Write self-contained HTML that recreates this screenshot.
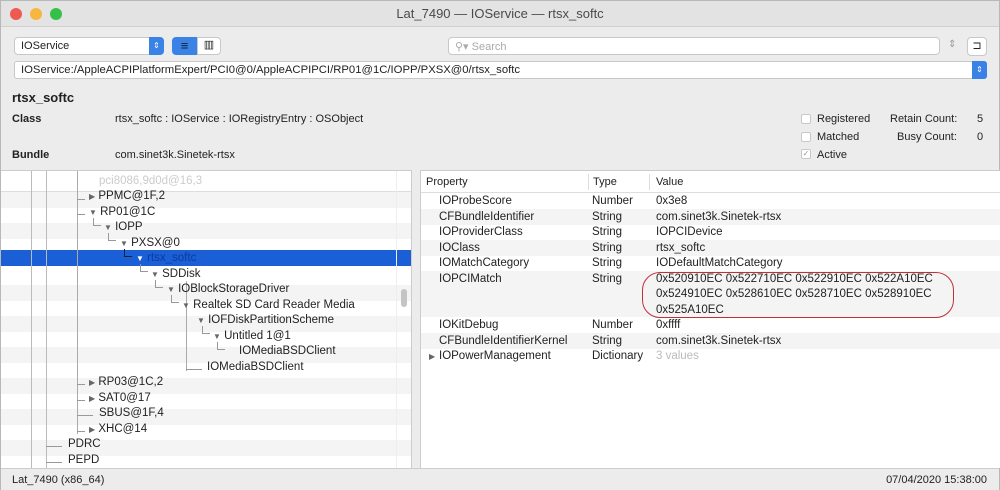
<!DOCTYPE html>
<html><head><meta charset="utf-8"><style>
*{box-sizing:border-box;margin:0;padding:0}
body{width:1000px;height:490px;overflow:hidden;background:#fff;font-family:"Liberation Sans",sans-serif;font-size:11px;color:#222}
.win{position:absolute;left:0;top:0;width:1000px;height:490px;background:#ececec;border:1px solid #b8b8b8}
.tb{position:absolute;left:0;top:0;width:998px;height:26px;background:#e3e3e3;border-bottom:1px solid #d0d0d0;text-align:center;line-height:26px;font-size:13px;color:#4a4a4a}
.dot{position:absolute;top:7px;width:12px;height:12px;border-radius:50%}
.a{position:absolute;white-space:nowrap}
.box{position:absolute;background:#fff;border:1px solid #c8c8c8;border-radius:4px}
.row{position:absolute;left:0;height:15.5px;width:100%}
.t{position:absolute;white-space:nowrap;font-size:11.5px}
.tri{font-size:8px;color:#666}
.c{position:absolute;border-left:1px solid #999;border-bottom:1px solid #999;width:8px;height:8px}
</style></head><body><div class="win">
<div class="tb">Lat_7490 — IOService — rtsx_softc
<div class="dot" style="left:9px;background:#ee5a52"></div><div class="dot" style="left:29px;background:#f6b73e"></div><div class="dot" style="left:49px;background:#35c048"></div></div>

<div class="box" style="left:13px;top:36px;width:150px;height:18px"><span class="a" style="left:6px;top:2px;font-size:11px">IOService</span><div style="position:absolute;right:-1px;top:-1px;width:15px;height:18px;background:#3b82e6;border-radius:0 4px 4px 0;color:#fff;font-size:8px;text-align:center;line-height:18px">⇕</div></div>
<div style="position:absolute;left:171px;top:36px;width:25px;height:18px;background:#3b82e6;border-radius:4px 0 0 4px;color:#123;text-align:center;line-height:17px;font-size:13px">≡</div>
<div class="box" style="left:196px;top:36px;width:24px;height:18px;border-radius:0 4px 4px 0;text-align:center;line-height:15px;font-size:11px">▥</div>
<div class="box" style="left:447px;top:36px;width:492px;height:18px"><span class="a" style="left:6px;top:2px;color:#aaa">⚲▾ Search</span></div>
<span class="a" style="left:947px;top:38px;color:#999;font-size:10px">⇕</span>
<div class="box" style="left:966px;top:36px;width:20px;height:19px;text-align:center;font-size:11px;line-height:17px">⊐</div>
<div class="box" style="left:13px;top:60px;width:973px;height:18px;border-radius:3px"><span class="a" style="left:6px;top:2px;font-size:11.3px">IOService:/AppleACPIPlatformExpert/PCI0@0/AppleACPIPCI/RP01@1C/IOPP/PXSX@0/rtsx_softc</span><div style="position:absolute;right:-1px;top:-1px;width:15px;height:18px;background:#3b82e6;border-radius:0 3px 3px 0;color:#fff;font-size:8px;text-align:center;line-height:18px">⇕</div></div>

<span class="a" style="left:11px;top:89px;font-size:13px;font-weight:bold">rtsx_softc</span>
<span class="a" style="left:11px;top:112px;font-weight:bold">Class</span>
<span class="a" style="left:114px;top:112px">rtsx_softc : IOService : IORegistryEntry : OSObject</span>
<span class="a" style="left:11px;top:148px;font-weight:bold">Bundle</span>
<span class="a" style="left:114px;top:148px">com.sinet3k.Sinetek-rtsx</span>
<div class="box" style="left:800px;top:113px;width:10px;height:10px;border-radius:2px"></div>
<div class="box" style="left:800px;top:131px;width:10px;height:10px;border-radius:2px"></div>
<div class="box" style="left:800px;top:148px;width:10px;height:10px;border-radius:2px;font-size:8px;line-height:8px;color:#999;text-align:center">✓</div>
<span class="a" style="left:816px;top:112px">Registered</span>
<span class="a" style="left:816px;top:130px">Matched</span>
<span class="a" style="left:816px;top:148px">Active</span>
<span class="a" style="left:889px;top:112px">Retain Count:</span><span class="a" style="left:976px;top:112px">5</span>
<span class="a" style="left:896px;top:130px">Busy Count:</span><span class="a" style="left:976px;top:130px">0</span>

<!-- tree -->
<div style="position:absolute;left:0;top:169px;width:410px;height:298px;background:#fff;border-top:1px solid #ccc;overflow:hidden">
<div class="row" style="top:0;height:21px;border-bottom:1px solid #ddd"><span class="t" style="left:98px;top:4px;color:#ccc">pci8086,9d0d@16,3</span></div>
<div class="row" style="top:21px;background:#f4f4f4"></div>
<div class="row" style="top:52px;background:#f4f4f4"></div>
<div class="row" style="top:79px;background:#1a5fd6;height:16px"></div>
<div class="row" style="top:114px;background:#f4f4f4"></div>
<div class="row" style="top:145px;background:#f4f4f4"></div>
<div class="row" style="top:176px;background:#f4f4f4"></div>
<div class="row" style="top:207px;background:#f4f4f4"></div>
<div class="row" style="top:238px;background:#f4f4f4"></div>
<div class="row" style="top:269px;background:#f4f4f4"></div>
<div style="position:absolute;left:30px;top:0;width:1px;height:298px;background:#bbb"></div>
<div style="position:absolute;left:45px;top:0;width:1px;height:298px;background:#bbb"></div>
<div style="position:absolute;left:76px;top:0;width:1px;height:263px;background:#aaa"></div>
<div style="position:absolute;left:185px;top:110px;width:1px;height:90px;background:#aaa"></div>
<div class="c" style="left:92px;top:47px"></div>
<div class="c" style="left:107px;top:62px"></div>
<div class="c" style="left:123px;top:78px;border-color:#123"></div>
<div class="c" style="left:139px;top:93px"></div>
<div class="c" style="left:154px;top:109px"></div>
<div class="c" style="left:170px;top:124px"></div>
<div class="c" style="left:201px;top:155px"></div>
<div class="c" style="left:216px;top:171px"></div>
<div style="position:absolute;left:76px;top:28px;width:8px;height:1px;background:#999"></div>
<div style="position:absolute;left:76px;top:43px;width:8px;height:1px;background:#999"></div>
<div style="position:absolute;left:76px;top:213px;width:8px;height:1px;background:#999"></div>
<div style="position:absolute;left:76px;top:229px;width:8px;height:1px;background:#999"></div>
<div style="position:absolute;left:76px;top:244px;width:16px;height:1px;background:#999"></div>
<div style="position:absolute;left:76px;top:260px;width:8px;height:1px;background:#999"></div>
<div style="position:absolute;left:45px;top:275px;width:16px;height:1px;background:#999"></div>
<div style="position:absolute;left:45px;top:291px;width:16px;height:1px;background:#999"></div>
<div style="position:absolute;left:185px;top:198px;width:16px;height:1px;background:#999"></div>
<div style="position:absolute;left:395px;top:0;width:1px;height:298px;background:#eee"></div>
<div style="position:absolute;left:400px;top:118px;width:6px;height:18px;border-radius:3px;background:#c4c4c4"></div>
<span class="t" style="left:88px;top:19px"><span class="tri">▶</span> PPMC@1F,2</span>
<span class="t" style="left:88px;top:35px"><span class="tri">▼</span> RP01@1C</span>
<span class="t" style="left:103px;top:50px"><span class="tri">▼</span> IOPP</span>
<span class="t" style="left:119px;top:66px"><span class="tri">▼</span> PXSX@0</span>
<span class="t" style="left:135px;top:81px;color:#0c3c9c"><span class="tri" style="color:#fff">▼</span> rtsx_softc</span>
<span class="t" style="left:150px;top:97px"><span class="tri">▼</span> SDDisk</span>
<span class="t" style="left:166px;top:112px"><span class="tri">▼</span> IOBlockStorageDriver</span>
<span class="t" style="left:181px;top:128px"><span class="tri">▼</span> Realtek SD Card Reader Media</span>
<span class="t" style="left:196px;top:143px"><span class="tri">▼</span> IOFDiskPartitionScheme</span>
<span class="t" style="left:212px;top:159px"><span class="tri">▼</span> Untitled 1@1</span>
<span class="t" style="left:238px;top:174px">IOMediaBSDClient</span>
<span class="t" style="left:206px;top:190px">IOMediaBSDClient</span>
<span class="t" style="left:88px;top:205px"><span class="tri">▶</span> RP03@1C,2</span>
<span class="t" style="left:88px;top:221px"><span class="tri">▶</span> SAT0@17</span>
<span class="t" style="left:98px;top:236px">SBUS@1F,4</span>
<span class="t" style="left:88px;top:252px"><span class="tri">▶</span> XHC@14</span>
<span class="t" style="left:67px;top:267px">PDRC</span>
<span class="t" style="left:67px;top:283px">PEPD</span>
</div>
<div style="position:absolute;left:410px;top:169px;width:10px;height:298px;background:#ececec;border-left:1px solid #ccc;border-right:1px solid #ccc"></div>

<!-- props -->
<div style="position:absolute;left:420px;top:169px;width:579px;height:298px;background:#fff;border-top:1px solid #ccc;overflow:hidden">
<div class="row" style="top:0;height:22px;border-bottom:1px solid #ddd"><span class="t" style="left:5px;top:5px;font-size:11px">Property</span><span class="t" style="left:172px;top:5px;font-size:11px">Type</span><span class="t" style="left:235px;top:5px;font-size:11px">Value</span>
<div style="position:absolute;left:167px;top:3px;width:1px;height:16px;background:#ddd"></div><div style="position:absolute;left:228px;top:3px;width:1px;height:16px;background:#ddd"></div></div>
<div class="row" style="top:38px;background:#f4f4f4"></div>
<div class="row" style="top:69px;background:#f4f4f4"></div>
<div class="row" style="top:100px;background:#f4f4f4;height:46px"></div>
<div class="row" style="top:162px;background:#f4f4f4"></div>
<div style="position:absolute;left:0;top:23px;font-size:11.5px;line-height:15.5px">
<div style="position:absolute;left:18px;top:0;white-space:nowrap">IOProbeScore<br>CFBundleIdentifier<br>IOProviderClass<br>IOClass<br>IOMatchCategory<br>IOPCIMatch<br><br><br>IOKitDebug<br>CFBundleIdentifierKernel<br><span style="position:absolute;left:-10px;font-size:8px;color:#666">▶</span>IOPowerManagement</div>
<div style="position:absolute;left:171px;top:0;white-space:nowrap">Number<br>String<br>String<br>String<br>String<br>String<br><br><br>Number<br>String<br>Dictionary</div>
<div style="position:absolute;left:235px;top:0;white-space:nowrap">0x3e8<br>com.sinet3k.Sinetek-rtsx<br>IOPCIDevice<br>rtsx_softc<br>IODefaultMatchCategory<br>0x520910EC 0x522710EC 0x522910EC 0x522A10EC<br>0x524910EC 0x528610EC 0x528710EC 0x528910EC<br>0x525A10EC<br>0xffff<br>com.sinet3k.Sinetek-rtsx<br><span style="color:#bbb">3 values</span></div>
</div>
<div style="position:absolute;left:221px;top:101px;width:312px;height:46px;border:1.5px solid #c0303a;border-radius:18px"></div>
</div>

<div style="position:absolute;left:0;top:467px;width:998px;height:22px;border-top:1px solid #ccc;background:#ececec"><span class="a" style="left:11px;top:5px">Lat_7490 (x86_64)</span><span class="a" style="right:12px;top:5px">07/04/2020 15:38:00</span></div>
</div></body></html>
